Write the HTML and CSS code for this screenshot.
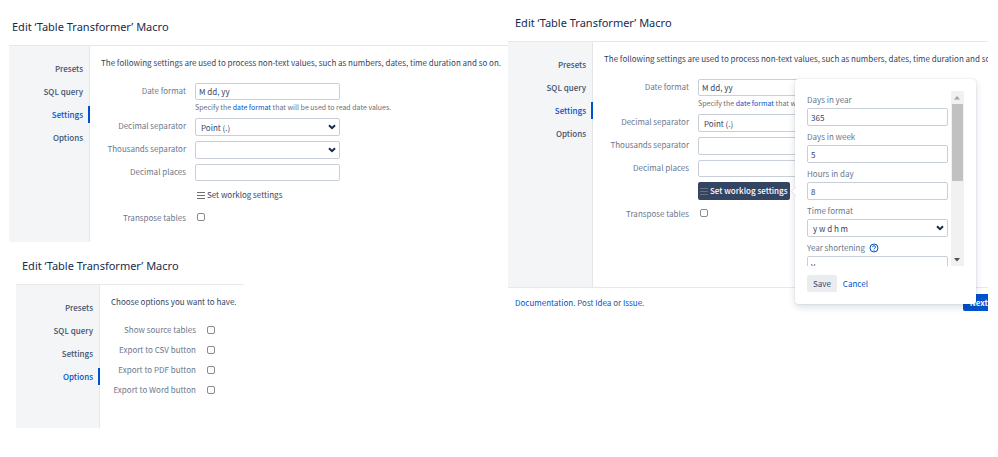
FILE: index.html
```html
<!DOCTYPE html>
<html lang="en">
<head>
<meta charset="utf-8">
<title>Edit Table Transformer Macro</title>
<link rel="stylesheet" href="styles.css">
</head>
<body>
<main class="board">
  <div class="column">
    <section class="dialog dialog-settings">
      <h2 class="title">Edit ‘Table Transformer’ Macro</h2>
      <div class="body">
        <nav class="tabs">
          <a class="tab" href="#">Presets</a>
          <a class="tab" href="#">SQL query</a>
          <a class="tab active" href="#">Settings</a>
          <a class="tab" href="#">Options</a>
        </nav>
        <div class="content">
          <p class="intro">The following settings are used to process non-text values, such as numbers, dates, time duration and so on.</p>
          <form class="form">
            <label class="label" for="a-date">Date format</label>
            <div class="field">
              <input class="input" id="a-date" type="text" value="M dd, yy">
              <p class="hint">Specify the <a class="link" href="#">date format</a> that will be used to read date values.</p>
            </div>
            <label class="label" for="a-dec">Decimal separator</label>
            <div class="select-wrap">
              <select class="input select" id="a-dec"><option>Point (.)</option></select>
              <svg class="chevron" viewBox="0 0 8 6"><path d="M1 1.2 4 4.2 7 1.2"/></svg>
            </div>
            <label class="label" for="a-tho">Thousands separator</label>
            <div class="select-wrap">
              <select class="input select" id="a-tho"><option></option></select>
              <svg class="chevron" viewBox="0 0 8 6"><path d="M1 1.2 4 4.2 7 1.2"/></svg>
            </div>
            <label class="label" for="a-pla">Decimal places</label>
            <input class="input" id="a-pla" type="text">
            <div class="field offset">
              <button class="worklog" type="button"><svg class="bars" viewBox="0 0 8 7"><path d="M0 .5h8M0 3.5h8M0 6.5h8"/></svg>Set worklog settings</button>
            </div>
            <label class="label" for="a-tra">Transpose tables</label>
            <input class="check" id="a-tra" type="checkbox">
          </form>
        </div>
      </div>
    </section>

    <section class="dialog dialog-options">
      <h2 class="title">Edit ‘Table Transformer’ Macro</h2>
      <div class="body">
        <nav class="tabs">
          <a class="tab" href="#">Presets</a>
          <a class="tab" href="#">SQL query</a>
          <a class="tab" href="#">Settings</a>
          <a class="tab active" href="#">Options</a>
        </nav>
        <div class="content">
          <p class="intro">Choose options you want to have.</p>
          <form class="form options">
            <label class="label" for="o-src">Show source tables</label>
            <input class="check" id="o-src" type="checkbox">
            <label class="label" for="o-csv">Export to CSV button</label>
            <input class="check" id="o-csv" type="checkbox">
            <label class="label" for="o-pdf">Export to PDF button</label>
            <input class="check" id="o-pdf" type="checkbox">
            <label class="label" for="o-doc">Export to Word button</label>
            <input class="check" id="o-doc" type="checkbox">
          </form>
        </div>
      </div>
    </section>
  </div>

  <section class="dialog dialog-worklog">
    <h2 class="title">Edit ‘Table Transformer’ Macro</h2>
    <div class="body">
      <nav class="tabs">
        <a class="tab" href="#">Presets</a>
        <a class="tab" href="#">SQL query</a>
        <a class="tab active" href="#">Settings</a>
        <a class="tab" href="#">Options</a>
      </nav>
      <div class="content">
        <p class="intro">The following settings are used to process non-text values, such as numbers, dates, time duration and so o</p>
        <form class="form">
          <label class="label" for="b-date">Date format</label>
          <div class="field">
            <input class="input" id="b-date" type="text" value="M dd, yy">
            <p class="hint">Specify the <a class="link" href="#">date format</a> that will</p>
          </div>
          <label class="label" for="b-dec">Decimal separator</label>
          <div class="select-wrap">
            <select class="input select" id="b-dec"><option>Point (.)</option></select>
          </div>
          <label class="label" for="b-tho">Thousands separator</label>
          <div class="select-wrap">
            <select class="input select" id="b-tho"><option></option></select>
          </div>
          <label class="label" for="b-pla">Decimal places</label>
          <input class="input" id="b-pla" type="text">
          <div class="field offset">
            <button class="worklog pressed" type="button"><svg class="bars" viewBox="0 0 8 7"><path d="M0 .5h8M0 3.5h8M0 6.5h8"/></svg>Set worklog settings</button>
            <div class="popover">
              <div class="scroller">
                <div class="fields">
                  <label class="pop-label" for="w-year">Days in year</label>
                  <input class="input" id="w-year" type="text" value="365">
                  <label class="pop-label" for="w-week">Days in week</label>
                  <input class="input" id="w-week" type="text" value="5">
                  <label class="pop-label" for="w-day">Hours in day</label>
                  <input class="input" id="w-day" type="text" value="8">
                  <label class="pop-label" for="w-fmt">Time format</label>
                  <div class="select-wrap">
                    <select class="input select" id="w-fmt"><option>y w d h m</option></select>
                    <svg class="chevron" viewBox="0 0 8 6"><path d="M1 1.2 4 4.2 7 1.2"/></svg>
                  </div>
                  <label class="pop-label" for="w-short">Year shortening
                    <svg class="help" viewBox="0 0 10 10"><circle cx="5" cy="5" r="4"/><path d="M3.600 4.100a1.400 1.400 0 1 1 2 1.300Q5 5.700 5 6.200M5 7v.8"/></svg>
                  </label>
                  <input class="input" id="w-short" type="text" value="y">
                </div>
                <div class="scrollbar">
                  <svg class="arrow up" viewBox="0 0 12 13"><path d="M3 8.500 6 5l3 3.500z"/></svg>
                  <div class="thumb"></div>
                  <svg class="arrow down" viewBox="0 0 12 13"><path d="M3 5h6L6 8.500z"/></svg>
                </div>
              </div>
              <div class="actions">
                <button class="save" type="button">Save</button>
                <a class="link" href="#">Cancel</a>
              </div>
            </div>
          </div>
          <label class="label" for="b-tra">Transpose tables</label>
          <input class="check" id="b-tra" type="checkbox">
        </form>
      </div>
    </div>
    <footer class="footer">
      <p class="foot-text"><a class="link" href="#">Documentation</a>. Post <a class="link" href="#">Idea</a> or <a class="link" href="#">Issue</a>.</p>
      <button class="next" type="button">Next</button>
    </footer>
  </section>
</main>
</body>
</html>
```
FILE: styles.css
```css
* {
  box-sizing: border-box;
}

body {
  margin: 0;
  background: #fff;
  color: #344563;
  font: 8px/12px "Noto Sans CJK SC", "Noto Sans", sans-serif;
}

p,
h2 {
  margin: 0;
}

button,
input,
select {
  margin: 0;
  color: inherit;
  font: inherit;
}

a {
  text-decoration: none;
}

.link {
  color: #0052cc;
}

.board {
  display: grid;
  grid-template-columns: 508fr 480fr;
  align-items: start;
  padding-right: 10px;
}

.column {
  display: flex;
  flex-direction: column;
  min-width: 0;
}

.dialog {
  min-width: 0;
}

.dialog-settings {
  padding-left: 9px;
}

.dialog-options {
  align-self: flex-start;
  width: 48%;
  padding-left: 16px;
}

.title {
  color: #172b4d;
  font: 400 11px/16px "Noto Sans", sans-serif;
  white-space: nowrap;
}

.dialog-settings .title {
  padding: 19px 3px 10px;
}

.dialog-options .title {
  padding: 16px 6px 10px;
}

.dialog-worklog .title {
  padding: 15px 7px 10px;
}

.body {
  display: flex;
  border-top: 1px solid #e6e8ec;
}

.dialog-settings .body {
  min-height: 197px;
}

.dialog-options .body {
  min-height: 144px;
}

.dialog-worklog .body {
  min-height: 247px;
  border-bottom: 1px solid #e6e8ec;
}

.tabs {
  display: flex;
  flex: 0 0 84px;
  flex-direction: column;
  gap: 6px;
  padding-top: 14px;
  border-right: 1px solid #e3e6ea;
  background: #f4f5f7;
}

.dialog-settings .tabs {
  flex-basis: 81px;
}

.dialog-worklog .tabs {
  flex-basis: 85px;
}

.tab {
  margin-right: -1px;
  padding-right: 5px;
  border-right: 2px solid transparent;
  color: #42526e;
  font-weight: 500;
  line-height: 17px;
  text-align: right;
}

.tab.active {
  border-color: #0052cc;
  color: #0052cc;
}

.content {
  flex: 1;
  min-width: 0;
  padding: 11px 0 0 11px;
}

.intro {
  white-space: nowrap;
}

.dialog-worklog .intro {
  overflow: hidden;
}

.form {
  display: grid;
  grid-template-columns: 85px 145px;
  column-gap: 9px;
  row-gap: 5px;
  padding-top: 14px;
}

.options {
  row-gap: 8px;
  padding-top: 16px;
}

.label {
  padding-top: 2px;
  color: #6b778c;
  text-align: right;
  white-space: nowrap;
}

.options .label {
  padding-top: 0;
}

.field {
  position: relative;
}

.offset {
  grid-column: 2;
  padding-bottom: 1px;
}

.input {
  display: block;
  width: 100%;
  height: 17px;
  padding: 0 3px;
  border: 1px solid #c9cfd9;
  border-radius: 2px;
  background: #fff;
}

.hint {
  padding-top: 2px;
  color: #6b6f78;
  font-size: 7px;
  line-height: 11px;
  white-space: nowrap;
}

.select-wrap {
  position: relative;
}

.select {
  height: 18px;
  padding: 2px 5px 0;
  appearance: none;
}

.chevron {
  position: absolute;
  top: 6px;
  right: 4px;
  width: 8px;
  height: 6px;
  fill: none;
  stroke: #172b4d;
  stroke-width: 2;
}

.worklog {
  display: flex;
  align-items: center;
  gap: 2px;
  height: 18px;
  padding: 0 2px;
  border: 0;
  border-radius: 2px;
  background: none;
  white-space: nowrap;
}

.bars {
  width: 8px;
  height: 7px;
  fill: none;
  stroke: #6f6f6f;
}

.pressed {
  background: #344563;
  color: #fff;
  font-weight: 500;
}

.check {
  align-self: center;
  width: 8px;
  height: 8px;
  margin-left: 2px;
  border: 1px solid #8a8a8a;
  border-radius: 2px;
  appearance: none;
}

.popover {
  position: absolute;
  z-index: 2;
  top: -103px;
  left: 97px;
  width: 181px;
  padding: 12px;
  border-radius: 3px;
  background: #fff;
  box-shadow: 0 0 1px rgba(9, 30, 66, 0.3), 0 3px 7px rgba(9, 30, 66, 0.15);
}

.popover::before {
  position: absolute;
  top: 109px;
  left: -3px;
  width: 6px;
  height: 6px;
  border: solid #e1e4e9;
  border-width: 0 0 1px 1px;
  background: #fff;
  content: "";
  transform: rotate(45deg);
}

.scroller {
  display: flex;
  gap: 3px;
  height: 175px;
  overflow: hidden;
}

.fields {
  flex: 1;
}

.fields .input {
  height: 18px;
}

.pop-label {
  display: flex;
  align-items: center;
  gap: 4px;
  height: 17px;
  color: #6b778c;
}

.pop-label:not(:first-child) {
  margin-top: 2px;
}

.help {
  width: 10px;
  height: 10px;
  fill: none;
  stroke: #0052cc;
}

.scrollbar {
  display: flex;
  flex-direction: column;
  width: 13px;
  background: #f1f1f1;
}

.arrow {
  width: 12px;
  height: 13px;
}

.up {
  fill: #a3a3a3;
}

.down {
  margin-top: auto;
  fill: #505050;
}

.thumb {
  height: 77px;
  margin: 0 1px;
  background: #c1c1c1;
}

.actions {
  display: flex;
  align-items: center;
  gap: 6px;
  padding-top: 9px;
}

.save {
  height: 17px;
  padding: 0 6px;
  border: 0;
  border-radius: 2px;
  background: #ebecf0;
}

.footer {
  display: flex;
  align-items: center;
  justify-content: space-between;
  padding: 6px 0 0 7px;
  overflow: hidden;
}

.foot-text {
  color: #42526e;
}

.next {
  height: 17px;
  padding: 0 0 0 7px;
  border: 0;
  border-radius: 2px 0 0 2px;
  background: #0052cc;
  color: #fff;
  font-weight: 600;
}
```
